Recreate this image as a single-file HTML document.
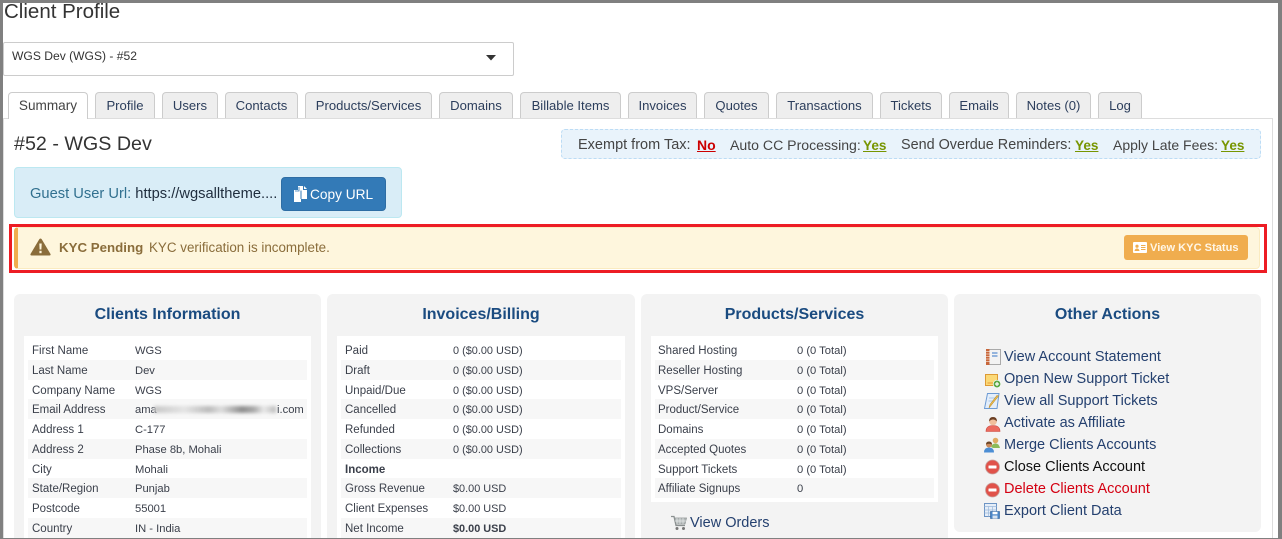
<!DOCTYPE html>
<html lang="en"><head><meta charset="utf-8"><title>Client Profile</title>
<style>
html,body{margin:0;padding:0;width:1282px;height:539px;overflow:hidden;background:#fff}
body{position:relative;font-family:"Liberation Sans",sans-serif;color:#333}
.a,.t,.p,.w,.s,.l,.v,.i,.o{position:absolute;white-space:nowrap;box-sizing:border-box}
.t{top:92px;height:26px;line-height:26px;background:#eee;border:1px solid #ccc;border-bottom:0;border-radius:4px 4px 0 0;text-align:center;font-size:13.1px;color:#2c3e5c}
.t.on{background:#fff;height:27px;z-index:2;color:#444}
.p{top:294px;height:245px;background:#f3f3f3;border-radius:6px 6px 0 0}
.h{position:absolute;top:295px;height:40px;line-height:40px;text-align:center;font-weight:bold;font-size:16px;color:#1a4b80;white-space:nowrap}
.w{top:336px;height:203px;background:#fff}
.s{height:20px;background:#f7f7f7}
.l,.v{font-size:11.5px;height:20px;line-height:20px;color:#3a3f4a;margin-top:1px}
.v{font-size:11.2px}
.m{font-size:10.9px}
.o{left:1004px;font-size:14.5px;height:22px;line-height:22px;color:#24406f;margin-top:1px}
.i{width:16px;height:16px}
.x{position:absolute;top:135px;font-size:14.1px;line-height:20px;color:#444;white-space:nowrap}
u{font-weight:bold;font-size:13.6px}
</style></head><body>

<!-- window frame -->
<div class="a" style="left:0;top:0;width:1282px;height:3px;background:#808080;z-index:9"></div>
<div class="a" style="left:0;top:0;width:3px;height:539px;background:#808080;z-index:9"></div>
<div class="a" style="left:1278px;top:0;width:4px;height:539px;background:#808080;z-index:9"></div>
<div class="a" style="left:0;top:538px;width:1282px;height:1px;background:#808080;z-index:9"></div>

<div class="a" style="left:4px;top:0;font-size:20.5px;line-height:23px;color:#333">Client Profile</div>

<div class="a" style="left:3px;top:42px;width:511px;height:34px;border:1px solid #ccc;border-radius:2px;background:#fff"></div>
<div class="a" style="left:12px;top:47px;font-size:12.1px;line-height:18px;color:#333">WGS Dev (WGS) - #52</div>
<svg class="a" style="left:486px;top:55px" width="11" height="6"><path d="M0 0H10L5 5.500Z" fill="#333"/></svg>

<!-- tabs -->
<div class="a" style="left:3px;top:118px;width:1270px;height:421px;border:1px solid #ddd;border-bottom:0;background:#fff"></div>
<div class="t on" style="left:8px;width:80px;font-size:13.6px">Summary</div>
<div class="t" style="left:95px;width:60px">Profile</div>
<div class="t" style="left:162px;width:56px">Users</div>
<div class="t" style="left:225px;width:73px">Contacts</div>
<div class="t" style="left:305px;width:127px">Products/Services</div>
<div class="t" style="left:439px;width:74px">Domains</div>
<div class="t" style="left:520px;width:101px">Billable Items</div>
<div class="t" style="left:628px;width:69px">Invoices</div>
<div class="t" style="left:704px;width:65px">Quotes</div>
<div class="t" style="left:776px;width:97px">Transactions</div>
<div class="t" style="left:880px;width:62px">Tickets</div>
<div class="t" style="left:949px;width:60px">Emails</div>
<div class="t" style="left:1016px;width:75px">Notes (0)</div>
<div class="t" style="left:1098px;width:44px">Log</div>

<div class="a" style="left:14px;top:131px;font-size:19.7px;line-height:26px;color:#333">#52 - WGS Dev</div>

<div class="a" style="left:561px;top:129px;width:700px;height:30px;background:#e9f3fb;border:1px dashed #bcdcf5;border-radius:4px"></div>
<div class="x" style="left:578px;font-size:14.5px">Exempt from Tax:</div><div class="x" style="left:697px"><u style="color:#c00;font-size:14px">No</u></div>
<div class="x" style="left:730px">Auto CC Processing:</div><div class="x" style="left:863px"><u style="color:#779500">Yes</u></div>
<div class="x" style="left:901px;font-size:14.4px">Send Overdue Reminders:</div><div class="x" style="left:1075px"><u style="color:#779500">Yes</u></div>
<div class="x" style="left:1113px;font-size:14px">Apply Late Fees:</div><div class="x" style="left:1221px"><u style="color:#779500">Yes</u></div>

<!-- guest url -->
<div class="a" style="left:14px;top:167px;width:388px;height:51px;background:#d9edf7;border:1px solid #bce8f1;border-radius:4px"></div>
<div class="a" style="left:30px;top:184px;font-size:14.7px;line-height:20px;color:#31708f">Guest User Url: <span style="color:#1f2d3d">https://wgsalltheme....</span></div>
<div class="a" style="left:281px;top:177px;width:105px;height:34px;background:#337ab7;border:1px solid #2e6da4;border-radius:4px"></div>
<svg class="a" style="left:294px;top:186px" width="13" height="16" viewBox="0 0 13 16"><path d="M4 0H9V4H13V13H7V16H0V4H4Z" fill="#fff"/><path d="M5 1V5H1" fill="none" stroke="#337ab7" stroke-width=".8"/><path d="M10 0L13 3H10Z" fill="#fff"/><path d="M7 4.500V13" stroke="#337ab7"/></svg>
<div class="a" style="left:310px;top:185px;font-size:13.7px;line-height:20px;color:#fff">Copy URL</div>

<!-- KYC alert -->
<div class="a" style="left:9px;top:224px;width:1258px;height:49px;border:3px solid #ed1c24;z-index:3"></div>
<div class="a" style="left:14px;top:227px;width:1246px;height:42px;background:#fef6dd;border:1px solid #faebc0;border-left:4px solid #f0ad4e;border-radius:4px"></div>
<svg class="a" style="left:30px;top:238px" width="21" height="18" viewBox="0 0 21 18"><path d="M10.500 0.500Q11.300 0.500 11.800 1.400L20.500 16Q21 17.500 19.500 17.500H1.500Q0 17.500 .5 16L9.200 1.400Q9.700 .5 10.500 .5Z" fill="#8a6d3b"/><path d="M9.300 5.500H11.700L11.400 11.500H9.600Z" fill="#fef6dd"/><rect x="9.400" y="12.800" width="2.200" height="2.400" fill="#fef6dd"/></svg>
<div class="a" style="left:59px;top:238px;font-size:13.3px;line-height:20px;font-weight:bold;color:#8a6d3b">KYC Pending</div>
<div class="a" style="left:149px;top:238px;font-size:13.4px;line-height:20px;color:#8a6d3b">KYC verification is incomplete.</div>
<div class="a" style="left:1124px;top:235px;width:124px;height:25px;background:#f0ad4e;border-radius:3px"></div>
<svg class="a" style="left:1133px;top:242px" width="14" height="11" viewBox="0 0 14 11"><rect width="14" height="11" rx="1" fill="#fff"/><circle cx="4" cy="4.200" r="1.600" fill="#f0ad4e"/><path d="M1.500 9Q2 6.500 4 6.500T6.500 9Z" fill="#f0ad4e"/><path d="M8 3.500h4.500M8 5.500h4.500M8 7.500h4.500" stroke="#f0ad4e"/></svg>
<div class="a" style="left:1150px;top:238px;font-size:11.1px;line-height:20px;font-weight:bold;color:#fff6e6">View KYC Status</div>

<!-- panels -->
<div class="p" style="left:14px;width:307px"></div>
<div class="p" style="left:327px;width:308px"></div>
<div class="p" style="left:641px;width:307px"></div>
<div class="p" style="left:954px;width:307px;height:238px;border-radius:6px"></div>
<div class="h" style="left:14px;width:307px">Clients Information</div>
<div class="h" style="left:327px;width:308px">Invoices/Billing</div>
<div class="h" style="left:641px;width:307px">Products/Services</div>
<div class="h" style="left:954px;width:307px">Other Actions</div>

<div class="w" style="left:24px;width:287px"></div>
<div class="w" style="left:337px;width:288px"></div>
<div class="w" style="left:651px;width:287px;height:166px"></div>

<!-- stripes -->
<div class="s" style="left:28px;width:279px;top:360px"></div><div class="s" style="left:28px;width:279px;top:399px"></div><div class="s" style="left:28px;width:279px;top:439px"></div><div class="s" style="left:28px;width:279px;top:478px"></div><div class="s" style="left:28px;width:279px;top:518px"></div>
<div class="s" style="left:341px;width:280px;top:360px"></div><div class="s" style="left:341px;width:280px;top:399px"></div><div class="s" style="left:341px;width:280px;top:439px"></div><div class="s" style="left:341px;width:280px;top:478px"></div><div class="s" style="left:341px;width:280px;top:518px"></div>
<div class="s" style="left:655px;width:279px;top:360px"></div><div class="s" style="left:655px;width:279px;top:399px"></div><div class="s" style="left:655px;width:279px;top:439px"></div><div class="s" style="left:655px;width:279px;top:478px"></div>

<!-- clients info -->
<div class="l" style="left:32px;top:340px">First Name</div><div class="v" style="left:135px;top:340px">WGS</div>
<div class="l" style="left:32px;top:360px">Last Name</div><div class="v" style="left:135px;top:360px">Dev</div>
<div class="l" style="left:32px;top:380px">Company Name</div><div class="v" style="left:135px;top:380px">WGS</div>
<div class="l" style="left:32px;top:399px">Email Address</div><div class="v" style="left:135px;top:399px">ama</div><div class="v" style="left:277px;top:399px">i.com</div>
<div class="a" style="left:154px;top:406px;width:122px;height:7px;background:linear-gradient(90deg,#c8c8c8,#e4e4e4 25%,#bbb 45%,#ddd 55%,#8e8e8e 72%,#aaa 82%,#e8e8e8 90%,#bbb);filter:blur(1.500px)"></div>
<div class="l" style="left:32px;top:419px">Address 1</div><div class="v" style="left:135px;top:419px">C-177</div>
<div class="l" style="left:32px;top:439px">Address 2</div><div class="v" style="left:135px;top:439px">Phase 8b, Mohali</div>
<div class="l" style="left:32px;top:459px">City</div><div class="v" style="left:135px;top:459px">Mohali</div>
<div class="l" style="left:32px;top:478px">State/Region</div><div class="v" style="left:135px;top:478px">Punjab</div>
<div class="l" style="left:32px;top:498px">Postcode</div><div class="v" style="left:135px;top:498px">55001</div>
<div class="l" style="left:32px;top:518px">Country</div><div class="v" style="left:135px;top:518px">IN - India</div>

<!-- invoices -->
<div class="l" style="left:345px;top:340px">Paid</div><div class="v m" style="left:453px;top:340px">0 ($0.00 USD)</div>
<div class="l" style="left:345px;top:360px">Draft</div><div class="v m" style="left:453px;top:360px">0 ($0.00 USD)</div>
<div class="l" style="left:345px;top:380px">Unpaid/Due</div><div class="v m" style="left:453px;top:380px">0 ($0.00 USD)</div>
<div class="l" style="left:345px;top:399px">Cancelled</div><div class="v m" style="left:453px;top:399px">0 ($0.00 USD)</div>
<div class="l" style="left:345px;top:419px">Refunded</div><div class="v m" style="left:453px;top:419px">0 ($0.00 USD)</div>
<div class="l" style="left:345px;top:439px">Collections</div><div class="v m" style="left:453px;top:439px">0 ($0.00 USD)</div>
<div class="l" style="left:345px;top:459px;font-weight:bold">Income</div>
<div class="l" style="left:345px;top:478px">Gross Revenue</div><div class="v m" style="left:453px;top:478px">$0.00 USD</div>
<div class="l" style="left:345px;top:498px">Client Expenses</div><div class="v m" style="left:453px;top:498px">$0.00 USD</div>
<div class="l" style="left:345px;top:518px">Net Income</div><div class="v m" style="left:453px;top:518px;font-weight:bold">$0.00 USD</div>

<!-- products -->
<div class="l" style="left:658px;top:340px">Shared Hosting</div><div class="v" style="left:797px;top:340px">0 (0 Total)</div>
<div class="l" style="left:658px;top:360px">Reseller Hosting</div><div class="v" style="left:797px;top:360px">0 (0 Total)</div>
<div class="l" style="left:658px;top:380px">VPS/Server</div><div class="v" style="left:797px;top:380px">0 (0 Total)</div>
<div class="l" style="left:658px;top:399px">Product/Service</div><div class="v" style="left:797px;top:399px">0 (0 Total)</div>
<div class="l" style="left:658px;top:419px">Domains</div><div class="v" style="left:797px;top:419px">0 (0 Total)</div>
<div class="l" style="left:658px;top:439px">Accepted Quotes</div><div class="v" style="left:797px;top:439px">0 (0 Total)</div>
<div class="l" style="left:658px;top:459px">Support Tickets</div><div class="v" style="left:797px;top:459px">0 (0 Total)</div>
<div class="l" style="left:658px;top:478px">Affiliate Signups</div><div class="v" style="left:797px;top:478px">0</div>

<svg class="i" style="left:671px;top:515px" viewBox="0 0 16 16"><path d="M0 1.500H3L5 10.500H14" fill="none" stroke="#8a9090" stroke-width="1.300"/><path d="M3.500 3H15.500L14 9H5Z" fill="#b5bbbb" stroke="#8a9090" stroke-width=".7"/><path d="M6 3V9M9 3V9M12 3V9M4 6H15" stroke="#e8eaea" stroke-width=".7"/><circle cx="6" cy="13.500" r="1.500" fill="#777"/><circle cx="12.500" cy="13.500" r="1.500" fill="#777"/></svg>
<div class="o" style="left:690px;top:511px">View Orders</div>

<!-- other actions -->
<svg class="i" style="left:985px;top:349px" viewBox="0 0 16 16"><rect x="1.500" y=".5" width="14" height="15" fill="#f3f3f3" stroke="#aaa"/><rect x="1" y="0" width="3.500" height="16" fill="#c8663a"/><path d="M1 2.500h3.500M1 5h3.500M1 7.500h3.500M1 10h3.500M1 12.500h3.500" stroke="#f0d8c8" stroke-width=".8"/><path d="M7 4H12.500M7 7H12.500" stroke="#5b8fd0" stroke-width="1.200"/></svg>
<div class="o" style="top:345px">View Account Statement</div>

<svg class="i" style="left:985px;top:372px" viewBox="0 0 16 16"><rect x=".5" y="2.500" width="12" height="11" fill="#fbd977" stroke="#dd9a35"/><path d="M2.500 11H8" stroke="#e89a35"/><circle cx="12" cy="12" r="3.800" fill="#5aa845" stroke="#fff" stroke-width=".7"/><path d="M10 12H14M12 10V14" stroke="#fff" stroke-width="1.200"/></svg>
<div class="o" style="top:367px">Open New Support Ticket</div>

<svg class="i" style="left:984px;top:393px" viewBox="0 0 16 16"><path d="M3.500 .5H15L13 15.500H.5Z" fill="#e4eefa" stroke="#6d9bd4"/><path d="M5 5H12M4.500 8H9" stroke="#a9c5e8"/><path d="M14.500 3L7 12.500L5 15L6 11.500L13 2.500Z" fill="#f1c24f" stroke="#b98a2d" stroke-width=".6"/></svg>
<div class="o" style="top:389px">View all Support Tickets</div>

<svg class="i" style="left:985px;top:416px" viewBox="0 0 16 16"><path d="M1 15.500Q1 9.500 8 9.500T15 15.500Z" fill="#ec6a5e" stroke="#c9463c" stroke-width=".6"/><circle cx="8" cy="5.500" r="3.800" fill="#f1bf9c"/><path d="M4 5.500Q4 1 8 1T12 5.500Q10 3.500 8 3.500T4 5.500Z" fill="#6b3f22"/></svg>
<div class="o" style="top:411px">Activate as Affiliate</div>

<svg class="i" style="left:984px;top:437px" viewBox="0 0 16 16"><path d="M7 10Q8 6.500 11.500 6.500T16 11H9Z" fill="#8cbb5a"/><circle cx="11.500" cy="3.500" r="2.800" fill="#e0ac63"/><path d="M0 15.500Q0 10.500 5 10.500T10 15.500Z" fill="#4c8ed4"/><circle cx="5" cy="7.500" r="3" fill="#c98a5c"/><path d="M2 7.500Q2 4.500 5 4.500T8 7.500Q5 6 2 7.500Z" fill="#6b4426"/></svg>
<div class="o" style="top:433px">Merge Clients Accounts</div>

<svg class="i" style="left:985px;top:459px" viewBox="0 0 16 16"><circle cx="7.500" cy="8" r="7" fill="#e0524a" stroke="#c9a09c" stroke-width=".8"/><rect x="3.500" y="6.500" width="8" height="3" rx=".5" fill="#fff"/></svg>
<div class="o" style="top:455px;color:#111">Close Clients Account</div>

<svg class="i" style="left:985px;top:482px" viewBox="0 0 16 16"><circle cx="7.500" cy="8" r="7" fill="#e0524a" stroke="#c9a09c" stroke-width=".8"/><rect x="3.500" y="6.500" width="8" height="3" rx=".5" fill="#fff"/></svg>
<div class="o" style="top:477px;color:#d40012">Delete Clients Account</div>

<svg class="i" style="left:984px;top:503px" viewBox="0 0 16 16"><rect x=".5" y=".5" width="12" height="13" fill="#e6eef8" stroke="#6d94c4"/><path d="M.5 3.500H12.500M.5 7H12.500M.5 10H12.500M4.500 3.500V13.500M8.500 3.500V13.500" stroke="#9bb8da" stroke-width=".7"/><rect x="6.500" y="8.500" width="9" height="7" fill="#4a86c8" stroke="#2e5f9a" stroke-width=".6"/><rect x="8.500" y="8.800" width="5" height="2.500" fill="#fff"/><rect x="8.500" y="12.500" width="5" height="3" fill="#d8e4f2"/></svg>
<div class="o" style="top:499px">Export Client Data</div>

</body></html>
